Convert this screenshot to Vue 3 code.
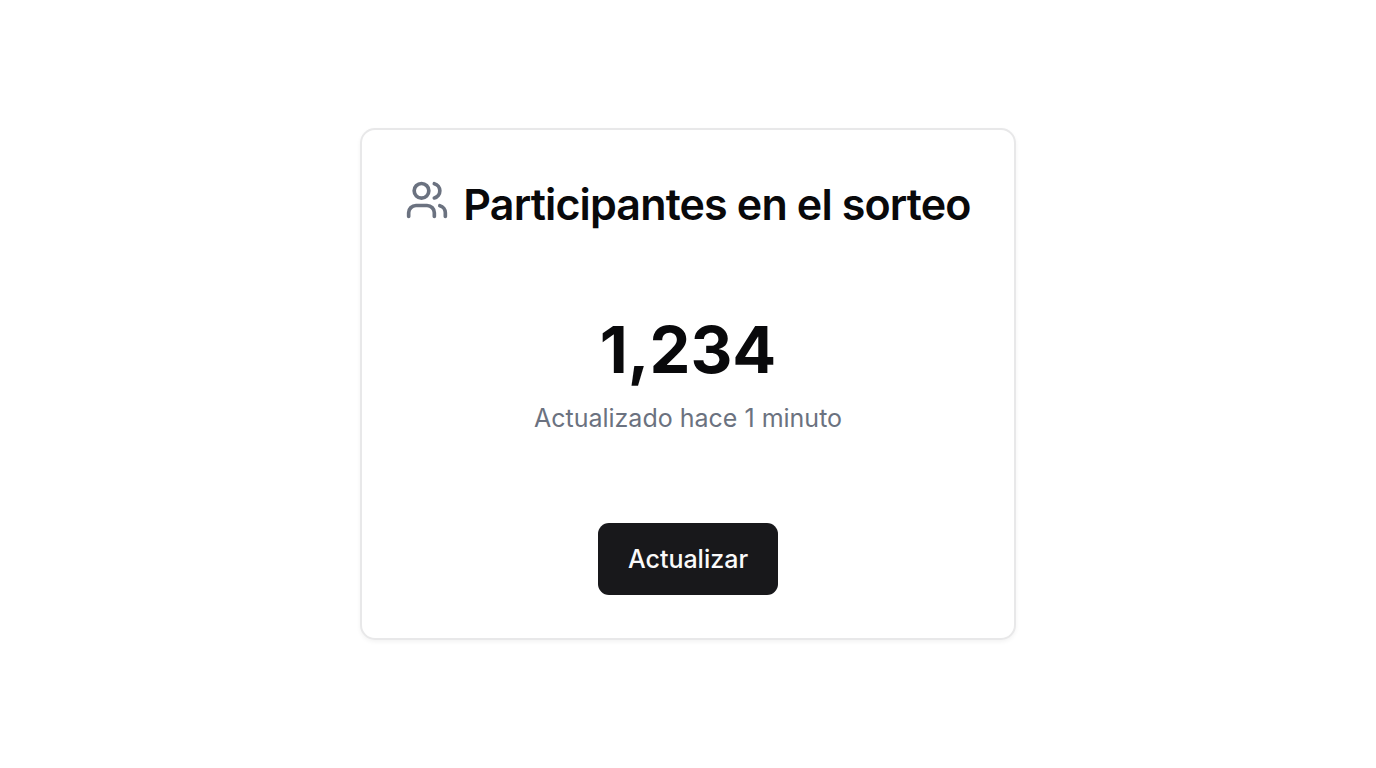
<script setup>
import { ref } from 'vue'

const participants = ref(1234)
</script>

<template>
  <main class="page">
    <section class="card">
      <header class="card-header">
        <h1 class="title">
          <svg class="icon" viewBox="0 0 24 24" aria-hidden="true">
            <path d="M16 21v-2a4 4 0 0 0-4-4H6a4 4 0 0 0-4 4v2" />
            <circle cx="9" cy="7" r="4" />
            <path d="M22 21v-2a4 4 0 0 0-3-3.87" />
            <path d="M16 3.13a4 4 0 0 1 0 7.75" />
          </svg>
          <span>Participantes en el sorteo</span>
        </h1>
      </header>
      <div class="content">
        <div class="count">{{ participants.toLocaleString('en-US') }}</div>
        <p class="updated">Actualizado hace 1 minuto</p>
      </div>
      <footer class="card-footer">
        <button class="refresh" type="button">Actualizar</button>
      </footer>
    </section>
  </main>
</template>

<style>
body {
  margin: 0;
  background: #fff;
}
</style>

<style scoped>
.page {
  box-sizing: border-box;
  min-height: 100vh;
  display: flex;
  align-items: center;
  justify-content: center;
  font-family: Inter, "Liberation Sans", sans-serif;
  color: #09090b;
}

.card {
  border: 2px solid #e8e8e9;
  border-radius: 15px;
  background: #fff;
  box-shadow: 0 2px 4px rgba(0, 0, 0, 0.05);
}

.card-header {
  padding: 43px;
}

.title {
  display: flex;
  align-items: center;
  gap: 14px;
  margin: 0;
  font-size: 43px;
  line-height: 62px;
  font-weight: 600;
  letter-spacing: -0.02em;
  white-space: nowrap;
}

.icon {
  width: 44px;
  height: 44px;
  margin-bottom: 8px;
  fill: none;
  stroke: #6b7280;
  stroke-width: 2;
  stroke-linecap: round;
  stroke-linejoin: round;
}

.content {
  padding: 36px 43px 44px;
  text-align: center;
}

.count {
  font-size: 65px;
  line-height: 72px;
  font-weight: 700;
}

.updated {
  margin: 14px 0 0;
  font-size: 25px;
  line-height: 36px;
  color: #6b7280;
}

.card-footer {
  display: flex;
  justify-content: center;
  padding: 43px;
}

.refresh {
  height: 72px;
  padding: 0 30px;
  border: 0;
  border-radius: 11px;
  background: #18181b;
  color: #fafafa;
  font-family: inherit;
  font-size: 25px;
  line-height: 36px;
  font-weight: 500;
  cursor: pointer;
}
</style>
